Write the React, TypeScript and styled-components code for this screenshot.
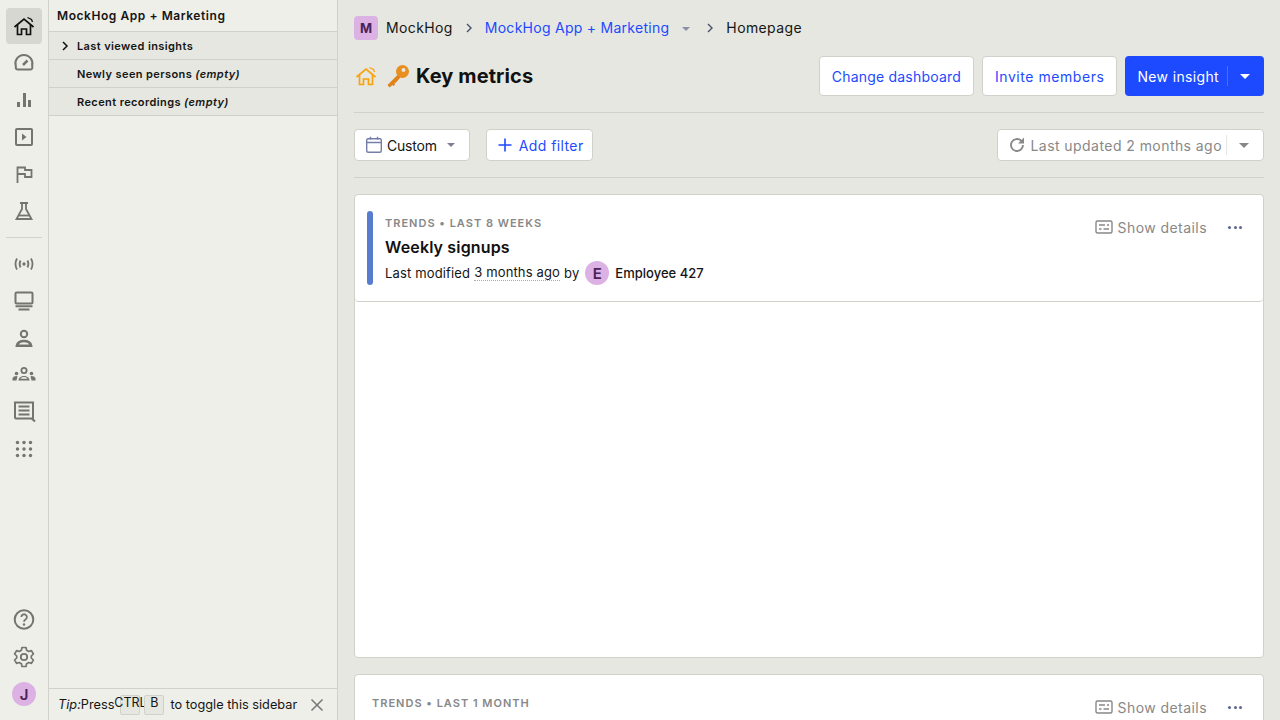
import styled, { createGlobalStyle } from "styled-components";
import type { ReactNode } from "react";

const GlobalStyles = createGlobalStyle`
  * {
    margin: 0;
    padding: 0;
    box-sizing: border-box;
  }

  body {
    width: 1280px;
    height: 720px;
    overflow: hidden;
    background: #e5e7e0;
    color: #111;
    font-family: Inter, "Liberation Sans", sans-serif;
    font-size: 14px;
  }
`;

const Icon = ({ size = 24, color = "currentColor", children }: { size?: number; color?: string; children: ReactNode }) => (
  <svg width={size} height={size} viewBox="0 0 24 24" fill="none" stroke={color} strokeWidth="2" style={{ flexShrink: 0 }}>
    {children}
  </svg>
);

const HomeGlyph = () => (
  <>
    <path d="M2.500 13 12 5 21.500 13" strokeWidth="1.700" />
    <path d="M5.500 11V20.500H9.500V15H14.500V20.500H18.500V11" strokeWidth="1.700" />
    <path d="M15.500 3.500 19.500 5.500 20.500 8" strokeWidth="1.300" />
  </>
);

const navTop = [
  <><path d="M20 15A8.500 8.500 0 1 0 3.800 15V16.500A2 2 0 0 0 5.800 18.500H18.500A1.800 1.800 0 0 0 20.300 16.500V13" /><path d="M11 14 15.500 9.500" strokeWidth="2.500" /></>,
  <><rect x="5" y="14" width="3" height="5" fill="currentColor" stroke="none" /><rect x="11" y="5" width="3" height="14" fill="currentColor" stroke="none" /><rect x="16" y="12" width="3" height="7" fill="currentColor" stroke="none" /></>,
  <><rect x="4" y="4" width="16" height="16" rx="1" /><path d="M10 8.500V15.500L14.500 12Z" fill="currentColor" stroke="none" /></>,
  <><path d="M5.500 21V5.500H13V8H19.500V15H13V12H5.500" strokeWidth="1.800" /></>,
  <><path d="M8 4H16M10 4V10L4.500 20H19.500L14 10V4" strokeWidth="1.800" /><path d="M7 16.500H17" strokeWidth="1.800" /></>,
];

const navMiddle = [
  <><circle cx="12" cy="12" r="1.700" fill="currentColor" stroke="none" /><path d="M8.500 8.500Q6.700 12 8.500 15.500M15.500 8.500Q17.300 12 15.500 15.500M5 6.500Q2 12 5 17.500M19 6.500Q22 12 19 17.500" strokeWidth="1.800" /></>,
  <><rect x="3.500" y="3.500" width="17" height="11" rx="1" /><path d="M3.500 17.200H20.500M6.500 20.500H17.500" /></>,
  <><circle cx="12" cy="8" r="3.200" /><path d="M4.500 20C4.500 13 19.500 13 19.500 20Z" fill="currentColor" stroke="currentColor" /><path d="M7 18.500C8 15.500 16 15.500 17 18.500Z" fill="#eeefe9" stroke="none" /></>,
  <><circle cx="12" cy="7.500" r="2.600" strokeWidth="1.800" /><path d="M6.500 17.500C6.500 11.500 17.500 11.500 17.500 17.500Z" fill="currentColor" stroke="none" /><path d="M8.500 15.800C9.500 13.500 14.500 13.500 15.500 15.800Z" fill="#eeefe9" stroke="none" /><circle cx="4.500" cy="10.500" r="1.800" fill="currentColor" stroke="none" /><circle cx="19.500" cy="10.500" r="1.800" fill="currentColor" stroke="none" /><path d="M0.500 17.500V15Q1.500 13 4.500 13L5.500 13.500 4.500 17.500ZM23.500 17.500V15Q22.500 13 19.500 13L18.500 13.500 19.500 17.500Z" fill="currentColor" stroke="none" /></>,
  <><path d="M3 2.500H21V19.500L23 21.500 19.500 18.500H4A1 1 0 0 1 3 17.500Z" /><path d="M6.500 6.500H17.500M6.500 10.500H17.500M6.500 14.500H17.500" /></>,
  <>{[5.500, 12, 18.500].flatMap((y) => [5.500, 12, 18.500].map((x) => <circle key={`${x}-${y}`} cx={x} cy={y} r="1.700" fill="currentColor" stroke="none" />))}</>,
];

const ChevronGlyph = () => (
  <svg width="12" height="12" viewBox="0 0 12 12" fill="none" stroke="#4a5070" strokeWidth="1.400"><path d="M4 2 8 6 4 10" /></svg>
);

function App() {
  return (
    <>
      <GlobalStyles />
      <Page>
        <Nav>
          <NavItem $active>
            <Icon><HomeGlyph /></Icon>
          </NavItem>
          {navTop.map((glyph, i) => (
            <NavItem key={i}><Icon>{glyph}</Icon></NavItem>
          ))}
          <NavDivider />
          {navMiddle.map((glyph, i) => (
            <NavItem key={i}><Icon>{glyph}</Icon></NavItem>
          ))}
          <NavSpacer />
          <NavItem>
            <Icon>
              <circle cx="12" cy="11.500" r="9.300" />
              <path d="M9.300 9A2.800 2.800 0 1 1 13.500 11.500C12.500 12.100 12 12.500 12 13.700" strokeWidth="1.800" />
              <circle cx="12" cy="16.500" r="1.200" fill="currentColor" stroke="none" />
            </Icon>
          </NavItem>
          <NavItem>
            <Icon>
              <path d="M10 2.500H14L14.600 5.300 16.700 6.500 19.400 5.600 21.400 9 19.300 11V13L21.400 15 19.400 18.400 16.700 17.500 14.600 18.700 14 21.500H10L9.400 18.700 7.300 17.500 4.600 18.400 2.600 15 4.700 13V11L2.600 9 4.600 5.600 7.300 6.500 9.400 5.300Z" strokeWidth="1.700" strokeLinejoin="round" />
              <circle cx="12" cy="12" r="3.200" strokeWidth="1.800" />
            </Icon>
          </NavItem>
          <NavAvatarSlot>
            <Avatar>J</Avatar>
          </NavAvatarSlot>
        </Nav>

        <Sidebar>
          <SidebarTitle>MockHog App + Marketing</SidebarTitle>
          <Accordion>
            <Chevron>
              <svg width="12" height="12" viewBox="0 0 12 12" fill="none" stroke="#111" strokeWidth="1.500"><path d="M4 2 8 6 4 10" /></svg>
            </Chevron>
            Last viewed insights
          </Accordion>
          <Accordion>
            <Chevron />
            <span>Newly seen persons <em>(empty)</em></span>
          </Accordion>
          <Accordion>
            <Chevron />
            <span>Recent recordings <em>(empty)</em></span>
          </Accordion>
          <SidebarFill />
          <TipBar>
            <TipLabel>Tip:</TipLabel>
            <span>Press</span>
            <Keys>
              <Key>CTRL</Key>
              <Key>B</Key>
            </Keys>
            <TipRest>to toggle this sidebar</TipRest>
            <TipClose>
              <svg width="14" height="14" viewBox="0 0 14 14" stroke="#777" strokeWidth="1.500"><path d="M1.500 1.500 12.500 12.500M12.500 1.500 1.500 12.500" /></svg>
            </TipClose>
          </TipBar>
        </Sidebar>

        <Main>
          <Breadcrumbs>
            <OrgBadge>M</OrgBadge>
            <Crumb>MockHog</Crumb>
            <CrumbSep><ChevronGlyph /></CrumbSep>
            <Crumb $link>MockHog App + Marketing</Crumb>
            <CrumbCaret><Caret $color="#8a8fa5" $half={4} /></CrumbCaret>
            <CrumbSep><ChevronGlyph /></CrumbSep>
            <Crumb>Homepage</Crumb>
          </Breadcrumbs>

          <TitleRow>
            <TitleIcon>
              <Icon color="#f9a30b"><HomeGlyph /></Icon>
            </TitleIcon>
            <KeyGlyph>
              <svg width="24" height="24" viewBox="0 0 24 24">
                <path d="M14 8.500 1.500 21 3.500 23.500 6.500 21 7.500 22 9 20.500 8.500 19 10 18.500 16 11.500Z" fill="#e0811a" />
                <circle cx="16.500" cy="7.500" r="6.500" fill="#e88f1f" />
                <circle cx="17.500" cy="6" r="2" fill="#e5e7e0" />
              </svg>
            </KeyGlyph>
            <Title>Key metrics</Title>
            <TitleActions>
              <Button $tracking={0.2}>Change dashboard</Button>
              <Button $tracking={0.55}>Invite members</Button>
              <PrimaryButton>
                New insight
                <PrimaryDivider />
                <Caret $color="#fff" $half={5} />
              </PrimaryButton>
            </TitleActions>
          </TitleRow>

          <FilterRow>
            <DateButton>
              <svg width="18" height="18" viewBox="0 0 18 18" fill="none" stroke="#747ea8" strokeWidth="1.400">
                <rect x="1.700" y="2.700" width="14.600" height="13.600" rx="1.500" />
                <path d="M1.700 6.500H16.300M5.500 .8V3.500M12.500 .8V3.500" />
              </svg>
              Custom
              <DateCaret><Caret $color="#7a7f95" $half={4} /></DateCaret>
            </DateButton>
            <AddFilter>
              <svg width="16" height="16" viewBox="0 0 16 16" stroke="#1d4aff" strokeWidth="1.600"><path d="M8 1.500V14.500M1.500 8H14.500" /></svg>
              Add filter
            </AddFilter>
            <Refresh>
              <svg width="18" height="18" viewBox="0 0 18 18" fill="none" stroke="#888" strokeWidth="1.800">
                <path d="M15 9A6 6 0 1 1 13.200 4.700L15 6.500" />
                <path d="M16 1.500V7.500H10Z" fill="#888" stroke="none" />
              </svg>
              <RefreshText>Last updated 2 months ago</RefreshText>
              <RefreshDivider />
              <Caret $color="#888" $half={5} />
            </Refresh>
          </FilterRow>

          <Card>
            <CardHeader>
              <Stripe />
              <CardText>
                <CardKicker>Trends • Last 8 weeks</CardKicker>
                <CardTitle>Weekly signups</CardTitle>
                <CardMeta>
                  <span>Last modified</span>
                  <Dotted>3 months ago</Dotted>
                  <span>by</span>
                  <MetaAvatar>E</MetaAvatar>
                  <Employee>Employee 427</Employee>
                </CardMeta>
              </CardText>
              <CardActions />
            </CardHeader>
            <CardBody />
          </Card>

          <Card>
            <CardHeader $plain>
              <CardText>
                <CardKicker>Trends • Last 1 month</CardKicker>
              </CardText>
              <CardActions />
            </CardHeader>
          </Card>
        </Main>
      </Page>
    </>
  );
}

const CardActions = () => (
  <Actions>
    <Details>
      <svg width="18" height="18" viewBox="0 0 18 18" fill="none" stroke="#888" strokeWidth="1.400">
        <rect x="1" y="3" width="16" height="12" rx="1.500" />
        <path d="M4 7H10M12 7H14M4 11H6.500M8.500 11H14" />
      </svg>
      Show details
    </Details>
    <Dots>
      <i /><i /><i />
    </Dots>
  </Actions>
);

export default App;

const Page = styled.div`
  display: flex;
  width: 1280px;
  height: 720px;
  overflow: hidden;
`;

const Nav = styled.nav`
  width: 49px;
  height: 720px;
  flex-shrink: 0;
  display: flex;
  flex-direction: column;
  gap: 1px;
  padding: 8px 6px;
  background: #eeefe9;
  border-right: 1px solid #d0d1c9;
`;

const NavItem = styled.div<{ $active?: boolean }>`
  width: 36px;
  height: 36px;
  flex-shrink: 0;
  display: flex;
  align-items: center;
  justify-content: center;
  border-radius: 4px;
  color: ${(p) => (p.$active ? "#111" : "#757570")};
  background: ${(p) => (p.$active ? "#d6d7d0" : "transparent")};
`;

const NavDivider = styled.div`
  height: 1px;
  flex-shrink: 0;
  margin: 7px 0;
  background: #d0d1c9;
`;

const NavSpacer = styled.div`
  flex: 1;
`;

const NavAvatarSlot = styled.div`
  height: 36px;
  flex-shrink: 0;
  display: flex;
  align-items: center;
  justify-content: center;
`;

const Avatar = styled.div`
  width: 24px;
  height: 24px;
  flex-shrink: 0;
  display: flex;
  align-items: center;
  justify-content: center;
  border-radius: 50%;
  background: #dcb1e3;
  color: #4a2257;
  font-size: 15px;
  font-weight: 600;
`;

const Sidebar = styled.aside`
  width: 289px;
  height: 720px;
  flex-shrink: 0;
  display: flex;
  flex-direction: column;
  background: #eeefe9;
  border-right: 1px solid #d0d1c9;
`;

const SidebarTitle = styled.div`
  height: 32px;
  flex-shrink: 0;
  display: flex;
  align-items: center;
  padding: 0 8px;
  border-bottom: 1px solid #d0d1c9;
  font-size: 12px;
  font-weight: 600;
  letter-spacing: 0.56px;
  color: #151515;
`;

const Accordion = styled.div`
  height: 28px;
  flex-shrink: 0;
  display: flex;
  align-items: center;
  padding-left: 10px;
  background: #e5e7e0;
  border-bottom: 1px solid #d0d1c9;
  font-size: 11px;
  font-weight: 600;
  letter-spacing: 0.4px;
  color: #151515;
`;

const Chevron = styled.span`
  width: 18px;
  height: 12px;
  display: flex;
  flex-shrink: 0;
`;

const SidebarFill = styled.div`
  flex: 1;
`;

const TipBar = styled.div`
  height: 32px;
  flex-shrink: 0;
  display: flex;
  align-items: center;
  padding-left: 9px;
  border-top: 1px solid #d0d1c9;
  font-size: 12.750px;
  color: #151515;
  white-space: nowrap;
`;

const TipLabel = styled.em`
  font-style: italic;
`;

const Keys = styled.span`
  display: flex;
  gap: 4px;
  margin: 0 6px 0 6px;
`;

const Key = styled.span`
  width: 20px;
  height: 20px;
  display: flex;
  justify-content: center;
  background: #e5e7e0;
  border: 1px solid #d0d1c9;
  border-radius: 2px;
  font-size: 12.500px;
  line-height: 14px;
`;

const TipRest = styled.span`
  flex: 1;
`;

const TipClose = styled.span`
  width: 14px;
  height: 14px;
  display: flex;
  margin-right: 13px;
`;

const Main = styled.main`
  flex: 1;
  min-width: 0;
  display: flex;
  flex-direction: column;
  padding: 16px;
`;

const Breadcrumbs = styled.div`
  height: 24px;
  flex-shrink: 0;
  display: flex;
  align-items: center;
`;

const OrgBadge = styled.span`
  width: 24px;
  height: 24px;
  display: flex;
  align-items: center;
  justify-content: center;
  margin-right: 8px;
  border-radius: 4px;
  background: #dcb1e3;
  color: #4a2257;
  font-size: 13px;
  font-weight: 700;
`;

const Crumb = styled.span<{ $link?: boolean }>`
  padding-bottom: 1px;
  font-size: 14px;
  letter-spacing: ${(p) => (p.$link ? "0.27px" : "0.38px")};
  color: ${(p) => (p.$link ? "#1d4aff" : "#151515")};
`;

const CrumbSep = styled.span`
  width: 12px;
  height: 12px;
  display: flex;
  margin: 0 10px;
`;

const CrumbCaret = styled.span`
  display: flex;
  margin: 1px 4px 0 13px;
`;

const TitleRow = styled.div`
  height: 73px;
  flex-shrink: 0;
  display: flex;
  align-items: center;
  padding: 16px 0;
  border-bottom: 1px solid #d0d1c9;
`;

const TitleIcon = styled.span`
  width: 24px;
  height: 24px;
  display: flex;
  margin-right: 8px;
`;

const KeyGlyph = styled.span`
  width: 24px;
  height: 24px;
  display: flex;
  margin-right: 6px;
`;

const Title = styled.h1`
  flex: 1;
  font-size: 20px;
  font-weight: 700;
  line-height: 24px;
  letter-spacing: 0.1px;
  color: #111;
`;

const TitleActions = styled.div`
  display: flex;
  gap: 8px;
`;

const Button = styled.button<{ $tracking: number }>`
  height: 40px;
  padding: 0 12px;
  background: #fff;
  border: 1px solid #d0d1c9;
  border-radius: 4px;
  color: #1d4aff;
  font-family: inherit;
  font-size: 14px;
  letter-spacing: ${(p) => p.$tracking}px;
`;

const PrimaryButton = styled.button`
  height: 40px;
  display: flex;
  align-items: center;
  padding: 0 14px 0 12px;
  background: #1d4aff;
  border: none;
  border-radius: 4px;
  color: #fff;
  font-family: inherit;
  font-size: 14px;
  letter-spacing: 0.35px;
`;

const PrimaryDivider = styled.span`
  width: 1px;
  height: 20px;
  margin: 0 12px 0 8px;
  background: rgba(255, 255, 255, 0.2);
`;

const Caret = styled.span<{ $color: string; $half: number }>`
  width: 0;
  height: 0;
  flex-shrink: 0;
  border-left: ${(p) => p.$half}px solid transparent;
  border-right: ${(p) => p.$half}px solid transparent;
  border-top: ${(p) => p.$half}px solid ${(p) => p.$color};
`;

const FilterRow = styled.div`
  height: 65px;
  flex-shrink: 0;
  display: flex;
  align-items: center;
  padding: 16px 0;
  margin-bottom: 16px;
  border-bottom: 1px solid #d0d1c9;
`;

const DateButton = styled.div`
  height: 32px;
  display: flex;
  align-items: center;
  gap: 4px;
  padding: 0 14px 0 10px;
  background: #fff;
  border: 1px solid #d0d1c9;
  border-radius: 4px;
  letter-spacing: -0.2px;
  color: #151515;
`;

const DateCaret = styled.span`
  display: flex;
  margin-left: 6px;
`;

const AddFilter = styled.div`
  height: 32px;
  display: flex;
  align-items: center;
  gap: 6px;
  margin-left: 16px;
  padding: 0 8px 0 10px;
  background: #fff;
  border: 1px solid #d0d1c9;
  border-radius: 4px;
  letter-spacing: 0.4px;
  color: #1d4aff;
`;

const Refresh = styled.div`
  height: 32px;
  display: flex;
  align-items: center;
  margin-left: auto;
  padding: 0 14px 0 10px;
  background: #fff;
  border: 1px solid #d0d1c9;
  border-radius: 4px;
  color: #888;
  letter-spacing: 0.44px;
`;

const RefreshText = styled.span`
  margin-left: 4px;
`;

const RefreshDivider = styled.span`
  width: 1px;
  height: 20px;
  margin: 0 12px 0 4px;
  background: #e5e7e0;
`;

const Card = styled.section`
  width: 910px;
  flex-shrink: 0;
  margin-bottom: 16px;
  background: #fff;
  border: 1px solid #d0d1c9;
  border-radius: 4px;
  overflow: hidden;
`;

const CardHeader = styled.header<{ $plain?: boolean }>`
  height: ${(p) => (p.$plain ? "48px" : "107px")};
  display: flex;
  padding: 16px;
  padding-left: ${(p) => (p.$plain ? "17px" : "12px")};
  border-bottom: ${(p) => (p.$plain ? "none" : "1px solid #d0d1c9")};
  border-radius: 0 0 4px 4px;
`;

const Stripe = styled.span`
  width: 6px;
  height: 74px;
  flex-shrink: 0;
  margin-right: 12px;
  border-radius: 3px;
  background: #597dce;
`;

const CardText = styled.div`
  flex: 1;
  min-width: 0;
`;

const CardKicker = styled.div`
  height: 16px;
  margin-top: 4px;
  font-size: 11px;
  font-weight: 600;
  line-height: 16px;
  letter-spacing: 1px;
  text-transform: uppercase;
  color: #888;
`;

const CardTitle = styled.h2`
  margin-top: 4px;
  font-size: 16px;
  font-weight: 600;
  line-height: 24px;
  letter-spacing: 0.15px;
  color: #111;
`;

const CardMeta = styled.div`
  display: flex;
  align-items: center;
  gap: 4px;
  height: 24px;
  margin-top: 2px;
  font-size: 13px;
  letter-spacing: 0.15px;
  color: #151515;
`;

const Dotted = styled.span`
  border-bottom: 1px dotted #aaa;
  line-height: 15px;
`;

const MetaAvatar = styled(Avatar)`
  margin-left: 2px;
`;

const Employee = styled.span`
  margin-left: 2px;
  font-weight: 500;
  letter-spacing: 0;
`;

const Actions = styled.div`
  display: flex;
  align-items: center;
  height: 32px;
`;

const Details = styled.div`
  display: flex;
  align-items: center;
  gap: 5px;
  letter-spacing: 0.44px;
  color: #888;
`;

const Dots = styled.span`
  display: flex;
  gap: 2.500px;
  margin: 0 5px 0 21px;

  i {
    width: 3px;
    height: 3px;
    border-radius: 50%;
    background: #5f6891;
  }
`;

const CardBody = styled.div`
  height: 355px;
`;
